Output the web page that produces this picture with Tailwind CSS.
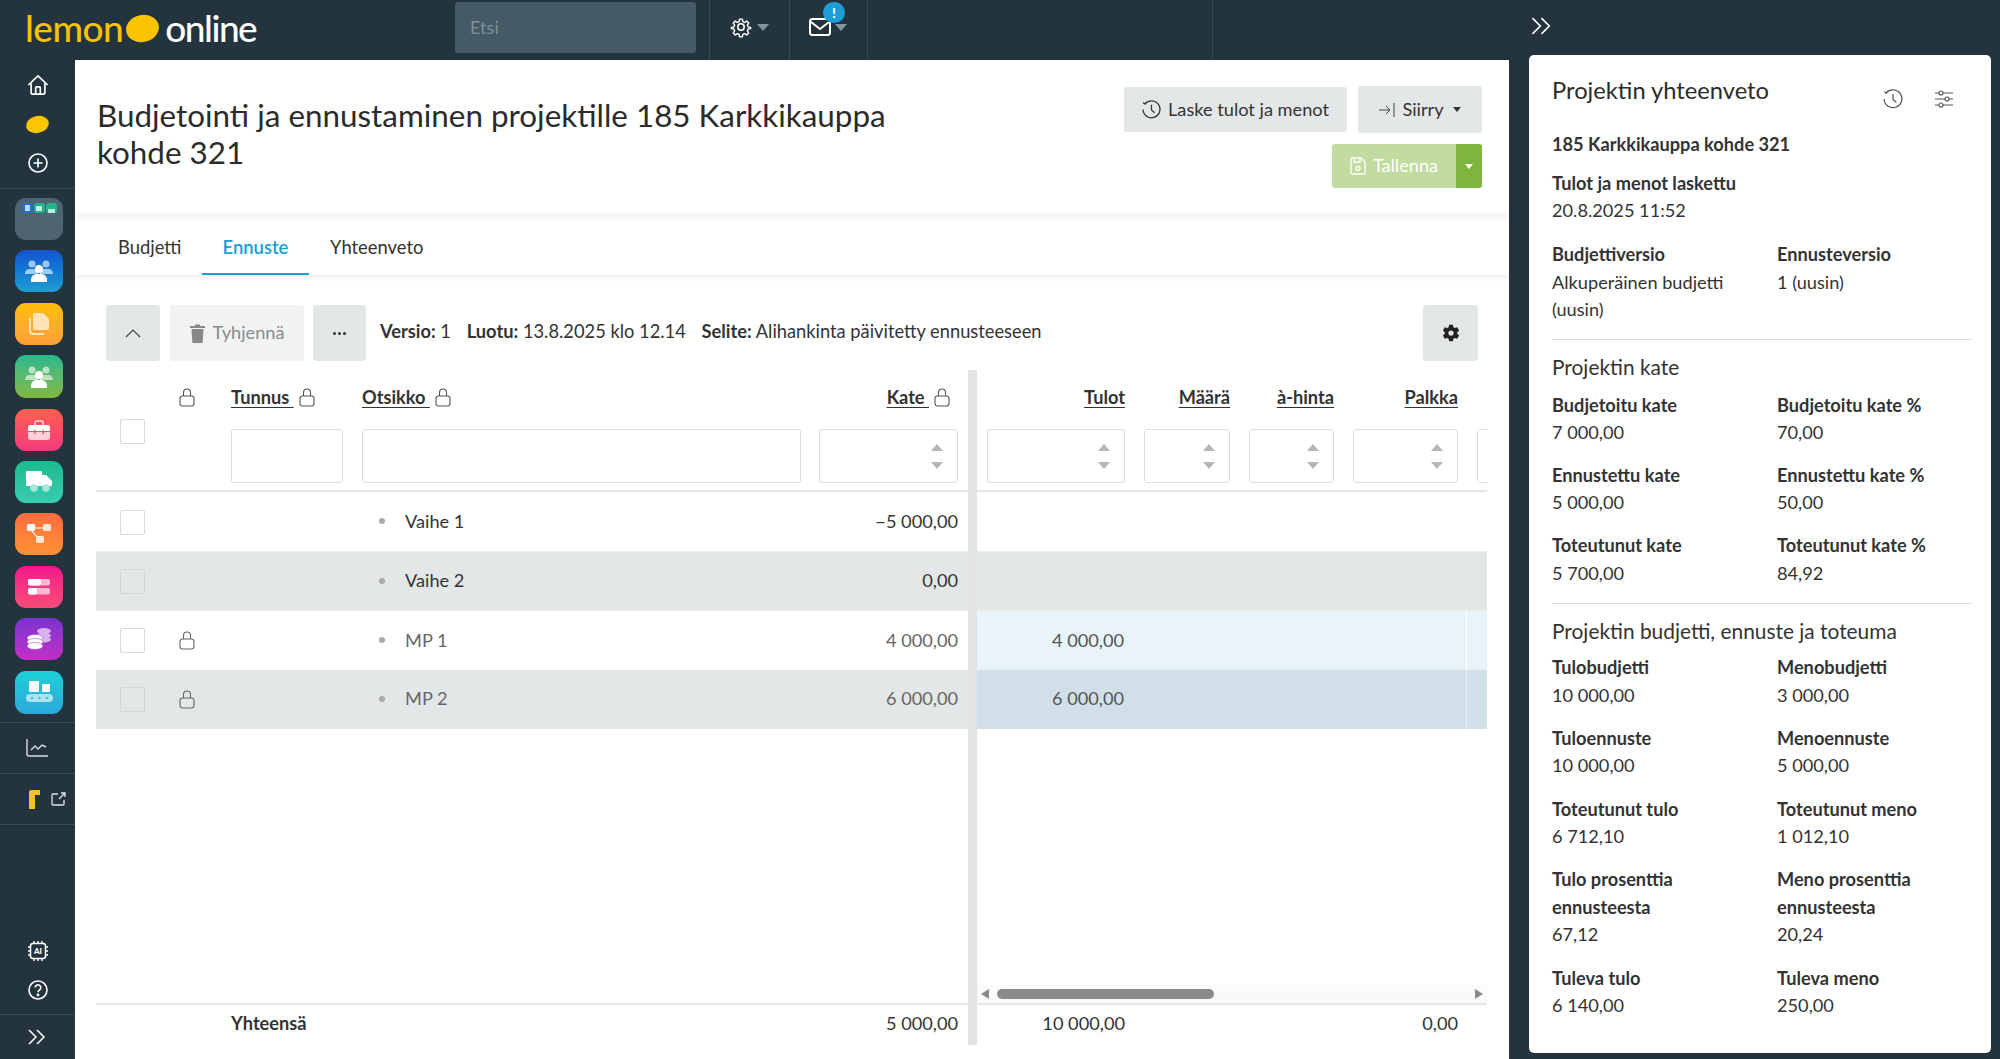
<!DOCTYPE html>
<html lang="fi">
<head>
  <meta charset="UTF-8" />
  <title>Budjetointi ja ennustaminen</title>
  <script src="https://cdn.jsdelivr.net/npm/@tailwindcss/browser@4"></script>
</head>
<body class="font-[Lato,sans-serif] bg-[#24343e] text-[#333] text-[16px] overflow-hidden">
<div class="flex w-[2000px] h-[1059px] overflow-hidden">

  <!-- Left: top bar + sidebar + main -->
  <div class="w-[1509px] flex flex-col">
    <header class="h-[60px] flex items-stretch shrink-0">
      <div class="w-[455px] pl-[25px] flex items-center text-[37px] font-medium leading-none pb-[6px]">
        <span class="text-[#f7c200] tracking-[-0.5px]">lemon</span>
        <span class="w-[33px] h-[27px] ml-[3px] mr-[6px] mt-[2px] bg-[#f9c400] rounded-[50%] -rotate-12"></span>
        <span class="text-white tracking-[-1.5px]">online</span>
      </div>
      <div class="w-[241px] h-[51px] mt-[2px] bg-[#455a67] rounded-[3px] px-[15px] flex items-center text-[#7d8e99] text-[18.2px]">Etsi</div>
      <div class="ml-[13px] w-[80px] border-l border-[#3a4a55] flex items-center justify-center gap-[5px] pb-[6px]">
        <svg class="w-[22px] h-[22px]" viewBox="0 0 24 24" fill="none" stroke="#fff" stroke-width="1.7" stroke-linejoin="round"><path d="M10.3 2.5h3.4l.5 3 2.3 1 2.5-1.700 2.400 2.400-1.700 2.500 1 2.300 3 .5v1.500l-3 .5-1 2.300 1.700 2.500-2.400 2.400-2.500-1.700-2.300 1-.5 3h-3.400l-.5-3-2.300-1-2.500 1.700-2.400-2.400 1.700-2.500-1-2.300-3-.5v-1.500l3-.5 1-2.300-1.700-2.500 2.400-2.400 2.500 1.700 2.300-1z" transform="translate(1.200 1.200) scale(.9)"/><circle cx="12" cy="12" r="3.500"/></svg>
        <span class="w-0 h-0 border-x-[6px] border-x-transparent border-t-[7px] border-t-[#8595a0]"></span>
      </div>
      <div class="w-[79px] border-x border-[#3a4a55] flex items-center justify-center gap-[4px] pb-[6px] pr-[2px] relative">
        <svg class="w-[22px] h-[20px]" viewBox="0 0 22 20" fill="none" stroke="#fff" stroke-width="2"><rect x="1" y="2" width="20" height="16" rx="2.500"/><path d="M2 5l9 7 9-7"/></svg>
        <span class="w-0 h-0 border-x-[6px] border-x-transparent border-t-[7px] border-t-[#8595a0]"></span>
        <span class="absolute left-[33px] top-[2px] w-[22px] h-[21px] rounded-full bg-[#1d9dd6] text-white text-[14px] font-bold flex items-center justify-center">!</span>
      </div>
      <div class="w-[345px] border-r border-[#3a4a55]"></div>
    </header>

    <div class="flex flex-1 min-h-0">
      <!-- Sidebar -->
      <aside class="w-[75px] shrink-0 flex flex-col items-center relative">
        <div class="w-full h-[129px] border-b border-[#3a4a55] flex flex-col items-center pt-[14px] shrink-0">
          <svg class="w-[22px] h-[22px]" viewBox="0 0 24 24" fill="none" stroke="#fff" stroke-width="1.800" stroke-linejoin="round"><path d="M1.500 12L12 2l10.500 10M4.500 10v10.500a1.500 1.500 0 0 0 1.500 1.500h12a1.500 1.500 0 0 0 1.500-1.500V10"/><path d="M9.500 22v-7a1 1 0 0 1 1-1h3a1 1 0 0 1 1 1v7"/></svg>
          <span class="mt-[20px] w-[23px] h-[17px] bg-[#fcc500] rounded-[50%] -rotate-12"></span>
          <svg class="mt-[20px] w-[20px] h-[20px]" viewBox="0 0 20 20" fill="none" stroke="#fff" stroke-width="1.600"><circle cx="10" cy="10" r="9"/><path d="M10 5.500v9M5.500 10h9"/></svg>
        </div>

        <div class="flex flex-col gap-[10.400px] pt-[9px] pl-[3px] h-[534px] shrink-0 border-b border-[#3a4a55] w-full items-center">
          <!-- first tile: three mini icons -->
          <div class="w-[48px] h-[42px] rounded-[11px] bg-[#4f6472] flex justify-center gap-[1px] pt-[5px] shrink-0">
            <span class="w-[11px] h-[10px] rounded-[3px] bg-[#2170d0] flex items-center justify-center"><span class="w-[5px] h-[6px] bg-[#bcd6f5]"></span></span>
            <span class="w-[11px] h-[10px] rounded-[3px] bg-[#1fb594] flex items-center justify-center"><span class="w-[6px] h-[5px] bg-[#c5efe3]"></span></span>
            <span class="w-[11px] h-[10px] rounded-[3px] bg-[#22b58a] flex items-end justify-center"><span class="w-[7px] h-[4px] bg-[#b7ecd8]"></span></span>
          </div>
          <!-- people blue -->
          <div class="w-[48px] h-[42px] rounded-[11px] bg-gradient-to-b from-[#1653d2] to-[#239cd2] flex items-center justify-center shrink-0">
            <svg class="w-[28px] h-[22px]" viewBox="0 0 28 22" fill="#fff"><g opacity=".6"><circle cx="7" cy="4" r="3.500"/><circle cx="21" cy="4" r="3.500"/><path d="M0 14c0-3 2-5 5-5h4c3 0 4 2 4 5zM15 14c0-3 1-5 4-5h4c3 0 5 2 5 5z"/></g><circle cx="14" cy="9" r="4"/><path d="M6 22v-2c0-4 3-6 6-6h4c3 0 6 2 6 6v2z"/></svg>
          </div>
          <!-- copy orange -->
          <div class="w-[48px] h-[42px] rounded-[11px] bg-gradient-to-b from-[#ffbe00] to-[#ff9f38] flex items-center justify-center shrink-0">
            <svg class="w-[20px] h-[22px]" viewBox="0 0 20 22"><path d="M1 5v13a3 3 0 0 0 3 3h11" fill="none" stroke="#ffe8c0" stroke-width="1.800"/><path d="M6 0h8l6 6v9a2 2 0 0 1-2 2H6a2 2 0 0 1-2-2V2a2 2 0 0 1 2-2z" fill="#ffe4b8"/></svg>
          </div>
          <!-- people green -->
          <div class="w-[48px] h-[43px] rounded-[11px] bg-gradient-to-b from-[#1fb98c] to-[#7fb83e] flex items-center justify-center shrink-0">
            <svg class="w-[28px] h-[22px]" viewBox="0 0 28 22" fill="#fff"><g opacity=".6"><circle cx="7" cy="4" r="3.500"/><circle cx="21" cy="4" r="3.500"/><path d="M0 14c0-3 2-5 5-5h4c3 0 4 2 4 5zM15 14c0-3 1-5 4-5h4c3 0 5 2 5 5z"/></g><circle cx="14" cy="9" r="4"/><path d="M6 22v-2c0-4 3-6 6-6h4c3 0 6 2 6 6v2z"/></svg>
          </div>
          <!-- toolbox red -->
          <div class="w-[48px] h-[42px] rounded-[11px] bg-gradient-to-b from-[#ff5f4c] to-[#f23a7c] flex items-center justify-center shrink-0">
            <svg class="w-[22px] h-[20px]" viewBox="0 0 22 20"><path d="M7 5V3a2 2 0 0 1 2-2h4a2 2 0 0 1 2 2v2" fill="none" stroke="#ffd8dc" stroke-width="1.500"/><path d="M3 5h16a3 3 0 0 1 3 3v3H0V8a3 3 0 0 1 3-3z" fill="#fff"/><path d="M0 12h22v5a3 3 0 0 1-3 3H3a3 3 0 0 1-3-3z" fill="#ffd0d8"/><path d="M6 10h1.500v4H6zM14.500 10H16v4h-1.500z" fill="#f8506c"/></svg>
          </div>
          <!-- truck teal -->
          <div class="w-[48px] h-[42px] rounded-[11px] bg-gradient-to-b from-[#1cb98e] to-[#37cdb2] flex items-center justify-center shrink-0">
            <svg class="w-[27px] h-[21px]" viewBox="0 0 27 21"><path d="M1 0h14a1 1 0 0 1 1 1v3h4l6 6v5H1a1 1 0 0 1-1-1V1a1 1 0 0 1 1-1z" fill="#fff"/><circle cx="8" cy="17" r="3.800" fill="#a5e8d6"/><circle cx="20" cy="17" r="3.800" fill="#a5e8d6"/></svg>
          </div>
          <!-- network orange -->
          <div class="w-[48px] h-[42px] rounded-[11px] bg-gradient-to-b from-[#ff6c40] to-[#ff9130] flex items-center justify-center shrink-0">
            <svg class="w-[24px] h-[20px]" viewBox="0 0 24 20"><path d="M7 4h10M5 7l6 7" stroke="#ffd9bd" stroke-width="1.500" fill="none"/><rect width="8" height="7" rx="1.500" fill="#fff"/><rect x="16" width="8" height="7" rx="1.500" fill="#ffe7d4"/><rect x="9" y="12" width="8" height="7" rx="1.500" fill="#ffe7d4"/></svg>
          </div>
          <!-- toggles pink -->
          <div class="w-[48px] h-[42px] rounded-[11px] bg-gradient-to-b from-[#f4128c] to-[#f64a78] flex items-center justify-center shrink-0">
            <svg class="w-[22px] h-[16px]" viewBox="0 0 22 16"><rect width="22" height="6.500" rx="2" fill="#ffb8d0"/><rect width="13" height="6.500" rx="2" fill="#fff"/><rect y="9" width="22" height="6.500" rx="2" fill="#ffb8d0"/><rect y="9" width="9" height="6.500" rx="2" fill="#fff"/></svg>
          </div>
          <!-- coins purple -->
          <div class="w-[48px] h-[42px] rounded-[11px] bg-gradient-to-b from-[#7a30d0] to-[#c22ec6] flex items-center justify-center shrink-0">
            <svg class="w-[25px] h-[22px]" viewBox="0 0 25 22" fill="#fff"><g fill="#d7b4f0"><ellipse cx="17" cy="3" rx="7" ry="3"/><ellipse cx="17" cy="7.500" rx="7" ry="3"/><ellipse cx="17" cy="11.500" rx="7" ry="3"/></g><ellipse cx="8" cy="10" rx="8" ry="3.500" stroke="#a02ccb" stroke-width=".5"/><ellipse cx="8" cy="14" rx="8" ry="3.500" stroke="#a02ccb" stroke-width=".5"/><ellipse cx="8" cy="18" rx="8" ry="3.500" stroke="#a02ccb" stroke-width=".5"/></svg>
          </div>
          <!-- conveyor cyan -->
          <div class="w-[48px] h-[43px] rounded-[11px] bg-gradient-to-b from-[#1dd0d6] to-[#2ca8d9] flex items-center justify-center shrink-0">
            <svg class="w-[27px] h-[22px]" viewBox="0 0 27 22"><rect x="3" y="0" width="10" height="11" rx="1" fill="#fff"/><rect x="16" y="3" width="8" height="8" rx="1" fill="#fff"/><rect y="13" width="27" height="8" rx="4" fill="#a8e4f0"/><circle cx="6" cy="17" r="1" fill="#2ca8d9"/><circle cx="13.500" cy="17" r="1" fill="#2ca8d9"/><circle cx="21" cy="17" r="1" fill="#2ca8d9"/></svg>
          </div>
        </div>

        <div class="w-full h-[51px] border-b border-[#3a4a55] flex items-center justify-center shrink-0">
          <svg class="w-[22px] h-[18px] mr-[1px]" viewBox="0 0 22 18" fill="none" stroke="#d8dde0" stroke-width="1.400"><path d="M1 0v15a2 2 0 0 0 2 2h19"/><path d="M5 11l4-4 3 3 4-4 4 2"/></svg>
        </div>
        <div class="w-full h-[51px] border-b border-[#3a4a55] flex items-center shrink-0 pl-[29px] gap-[11px]">
          <span class="w-[11px] h-[19px] border-l-[6px] border-t-[5px] border-[#f4c22b] rounded-tl-[3px]"></span>
          <svg class="w-[15px] h-[14px]" viewBox="0 0 15 14" fill="none" stroke="#e0e4e6" stroke-width="1.300"><path d="M7 2H2a1 1 0 0 0-1 1v9a1 1 0 0 0 1 1h10a1 1 0 0 0 1-1V8M8 7l6-6M10 1h4v4"/></svg>
        </div>

        <div class="flex-1"></div>
        <svg class="w-[22px] h-[22px] mb-[18px]" viewBox="0 0 22 22" fill="none" stroke="#fff"><rect x="3.500" y="3.500" width="15" height="15" rx="2.500" stroke-width="1.500"/><path d="M7 1v2.500M11 1v2.500M15 1v2.500M7 18.500V21M11 18.500V21M15 18.500V21M1 7h2.500M1 11h2.500M1 15h2.500M18.500 7H21M18.500 11H21M18.500 15H21" stroke-width="1.400"/><text x="11" y="14" text-anchor="middle" fill="#fff" stroke="none" font-size="8" font-weight="900" font-family="Lato">AI</text></svg>
        <svg class="w-[20px] h-[20px] mb-[14px]" viewBox="0 0 20 20" fill="none" stroke="#fff" stroke-width="1.600"><circle cx="10" cy="10" r="9"/><path d="M7.200 7.600a2.800 2.800 0 1 1 4.300 2.400c-1 .6-1.500 1.100-1.500 2.200"/><circle cx="10" cy="15" r=".6" fill="#fff"/></svg>
        <div class="w-full h-[45px] border-t border-[#3a4a55] flex items-center justify-center shrink-0">
          <svg class="w-[19px] h-[16px]" viewBox="0 0 19 16" fill="none" stroke="#fff" stroke-width="1.500"><path d="M1 1l7 7-7 7M9 1l7 7-7 7"/></svg>
        </div>
      </aside>

      <!-- Main -->
      <main class="flex-1 bg-white flex flex-col min-w-0">
        <section class="h-[154px] shrink-0 flex justify-between pl-[22px] pr-[27px] shadow-[0_2px_6px_rgba(0,0,0,0.08)] relative">
          <h1 class="w-[810px] pt-[37px] text-[31.400px] leading-[37px] text-[#2b2b2b] font-normal">Budjetointi ja ennustaminen projektille 185 Karkkikauppa kohde 321</h1>
          <div class="flex flex-col items-end pt-[26px] gap-[11px]">
            <div class="flex gap-[11px] items-center">
              <div class="w-[223px] h-[45px] rounded-[3px] bg-[#e4e7e8] flex items-center justify-center gap-[7px] text-[18.2px] text-[#333]">
                <svg class="w-[19px] h-[19px]" viewBox="0 0 18 18" fill="none" stroke="#333" stroke-width="1.200"><path d="M3 3.500A8 8 0 1 1 1 9M1 2.500l2.200 1.300L4.500 1.500M9 4.500V9.500l3 2.500"/></svg>
                Laske tulot ja menot
              </div>
              <div class="w-[124px] h-[47px] rounded-[3px] bg-[#e4e7e8] flex items-center justify-center gap-[6px] text-[18.2px] text-[#333]">
                <svg class="w-[17px] h-[14px]" viewBox="0 0 17 14" fill="none" stroke="#444" stroke-width="1"><path d="M0 7h10M7 3l4 4-4 4M15 0v14"/></svg>
                Siirry
                <span class="ml-[3px] w-0 h-0 border-x-[4px] border-x-transparent border-t-[5px] border-t-[#333]"></span>
              </div>
            </div>
            <div class="flex h-[44px] rounded-[3px] overflow-hidden text-white text-[18.2px]">
              <div class="w-[124px] bg-[#c1dba1] flex items-center justify-center gap-[7px]">
                <svg class="w-[16px] h-[18px]" viewBox="0 0 16 18" fill="none" stroke="#fff" stroke-width="1.300"><path d="M2 1h9l4 4v10.500a1.500 1.500 0 0 1-1.500 1.500h-11A1.500 1.500 0 0 1 1 15.500V2a1 1 0 0 1 1-1z"/><circle cx="8" cy="11.500" r="2"/><path d="M4 1v4h6V1"/></svg>
                Tallenna
              </div>
              <div class="w-[26px] bg-[#7eb53c] flex items-center justify-center">
                <span class="w-0 h-0 border-x-[4px] border-x-transparent border-t-[5px] border-t-white"></span>
              </div>
            </div>
          </div>
        </section>

        <nav class="h-[61px] shrink-0 flex pl-[22px] text-[18.4px] shadow-[0_2px_6px_rgba(0,0,0,0.08)] relative">
          <a class="w-[105px] pl-[21px] pt-[20px]">Budjetti</a>
          <a class="w-[107px] text-center pt-[20px] h-[61px] border-b-2 border-[#1a9ed4] text-[#1a9ed4] font-semibold">Ennuste</a>
          <a class="pl-[21px] pt-[20px]">Yhteenveto</a>
        </nav>

        <!-- Toolbar -->
        <div class="mt-[30px] h-[56px] shrink-0 ml-[31px] mr-[31px] flex items-center">
          <div class="w-[54px] h-[56px] bg-[#e4e7e8] rounded-[3px] flex items-center justify-center">
            <svg class="w-[16px] h-[10px]" viewBox="0 0 16 10" fill="none" stroke="#444" stroke-width="1.200"><path d="M1 9l7-7 7 7"/></svg>
          </div>
          <div class="ml-[10px] w-[134px] h-[56px] bg-[#f1f3f3] rounded-[3px] flex items-center justify-center gap-[8px] text-[#8a8a8a] text-[18.2px]">
            <svg class="w-[15px] h-[19px]" viewBox="0 0 15 19" fill="#888"><path d="M0 2h5V0.500h5V2h5v2H0zM1.500 5h12l-.8 13a1 1 0 0 1-1 1H3.300a1 1 0 0 1-1-1z"/></svg>
            Tyhjennä
          </div>
          <div class="ml-[9px] w-[53px] h-[56px] bg-[#e4e7e8] rounded-[3px] flex items-center justify-center gap-[2px]">
            <span class="w-[3px] h-[3px] rounded-full bg-[#333]"></span><span class="w-[3px] h-[3px] rounded-full bg-[#333]"></span><span class="w-[3px] h-[3px] rounded-full bg-[#333]"></span>
          </div>
          <p class="ml-[14px] pb-[2px] text-[18.3px] text-[#333]"><b>Versio:</b> 1 <b class="ml-[11px]">Luotu:</b> 13.8.2025 klo 12.14 <b class="ml-[11px]">Selite:</b> Alihankinta päivitetty ennusteeseen</p>
          <div class="ml-auto w-[55px] h-[56px] bg-[#e4e7e8] rounded-[3px] flex items-center justify-center">
            <svg class="w-[18px] h-[18px]" viewBox="0 0 24 24" fill="#222"><path fill-rule="evenodd" d="M9.500 1h5l.7 3.300 1.900 1.100 3.200-1 2.500 4.300-2.500 2.200v2.200l2.500 2.200-2.500 4.300-3.200-1-1.900 1.100-.7 3.300h-5l-.7-3.300-1.900-1.100-3.200 1-2.500-4.300 2.500-2.200v-2.200L1.200 8.700l2.500-4.300 3.200 1 1.900-1.100zM12 8.500a3.500 3.500 0 1 0 0 7 3.500 3.500 0 0 0 0-7z"/></svg>
          </div>
        </div>

        <!-- Table -->
        <div class="mt-[9px] ml-[21px] w-[1391px] h-[675px] flex shrink-0">
          <!-- Frozen columns -->
          <div class="w-[872px] flex flex-col shrink-0">
            <div class="h-[122px] flex border-b-2 border-[#e4e5e6] shrink-0">
              <div class="w-[76px] pl-[24px] pt-[49px]"><span class="block w-[25px] h-[25px] bg-white border border-[#d9d9d9] rounded-[2px]"></span></div>
              <div class="w-[59px] pt-[18px] pl-[7px]">
                <svg class="w-[16px] h-[19px]" viewBox="0 0 16 19" fill="none" stroke="#555" stroke-width="1.100"><path d="M4.500 8V4.500a3.500 3.500 0 0 1 7 0V8"/><rect x="1" y="8" width="14" height="10" rx="2.500"/></svg>
              </div>
              <div class="w-[131px]">
                <div class="h-[59px] pt-[14px] flex items-start gap-[5px]"><span class="font-bold underline underline-offset-[3px] text-[18.2px]">Tunnus&nbsp;</span><svg class="w-[16px] h-[19px] mt-[4px]" viewBox="0 0 16 19" fill="none" stroke="#555" stroke-width="1.100"><path d="M4.500 8V4.500a3.500 3.500 0 0 1 7 0V8"/><rect x="1" y="8" width="14" height="10" rx="2.500"/></svg></div>
                <div class="w-[112px] h-[54px] border border-[#dcdcdc] rounded-[3px]"></div>
              </div>
              <div class="w-[457px]">
                <div class="h-[59px] pt-[14px] flex items-start gap-[5px]"><span class="font-bold underline underline-offset-[3px] text-[18.2px]">Otsikko&nbsp;</span><svg class="w-[16px] h-[19px] mt-[4px]" viewBox="0 0 16 19" fill="none" stroke="#555" stroke-width="1.100"><path d="M4.500 8V4.500a3.500 3.500 0 0 1 7 0V8"/><rect x="1" y="8" width="14" height="10" rx="2.500"/></svg></div>
                <div class="w-[439px] h-[54px] border border-[#dcdcdc] rounded-[3px]"></div>
              </div>
              <div class="w-[139px]">
                <div class="h-[59px] pt-[14px] flex items-start justify-end gap-[5px]"><span class="font-bold underline underline-offset-[3px] text-[18.2px]">Kate&nbsp;</span><svg class="w-[16px] h-[19px] mt-[4px] mr-[8px]" viewBox="0 0 16 19" fill="none" stroke="#555" stroke-width="1.100"><path d="M4.500 8V4.500a3.500 3.500 0 0 1 7 0V8"/><rect x="1" y="8" width="14" height="10" rx="2.500"/></svg></div>
                <div class="h-[54px] border border-[#dcdcdc] rounded-[3px] flex flex-col items-end justify-center gap-[11px] pr-[14px]">
                  <span class="w-0 h-0 border-x-[6px] border-x-transparent border-b-[7px] border-b-[#b5b5b5]"></span>
                  <span class="w-0 h-0 border-x-[6px] border-x-transparent border-t-[7px] border-t-[#b5b5b5]"></span>
                </div>
              </div>
            </div>

            <div class="h-[60px] flex items-center shrink-0 text-[18.2px] text-[#333] border-b border-[#eceeee]">
              <div class="w-[135px] pl-[24px] pt-[1px]"><span class="block w-[25px] h-[25px] bg-white border border-[#d9d9d9] rounded-[2px]"></span></div>
              <div class="w-[131px]"></div>
              <div class="w-[457px] flex items-center"><span class="w-[6px] h-[6px] rounded-full bg-[#aaa] ml-[17px] mr-[20px]"></span>Vaihe 1</div>
              <div class="w-[139px] text-right">−5 000,00</div>
            </div>
            <div class="h-[59px] flex items-center shrink-0 text-[18.2px] text-[#333] bg-[#e4e7e8] border-b border-[#eceeee]">
              <div class="w-[135px] pl-[24px]"><span class="block w-[25px] h-[25px] border border-[#d3d6d7] rounded-[2px]"></span></div>
              <div class="w-[131px]"></div>
              <div class="w-[457px] flex items-center"><span class="w-[6px] h-[6px] rounded-full bg-[#aaa] ml-[17px] mr-[20px]"></span>Vaihe 2</div>
              <div class="w-[139px] text-right">0,00</div>
            </div>
            <div class="h-[59px] flex items-center shrink-0 text-[18.2px] text-[#666]">
              <div class="w-[76px] pl-[24px]"><span class="block w-[25px] h-[25px] bg-white border border-[#d9d9d9] rounded-[2px]"></span></div>
              <div class="w-[59px] pl-[7px]"><svg class="block w-[16px] h-[19px]" viewBox="0 0 16 19" fill="none" stroke="#666" stroke-width="1.100"><path d="M4.500 8V4.500a3.500 3.500 0 0 1 7 0V8"/><rect x="1" y="8" width="14" height="10" rx="2.500"/></svg></div>
              <div class="w-[131px]"></div>
              <div class="w-[457px] flex items-center"><span class="w-[6px] h-[6px] rounded-full bg-[#aaa] ml-[17px] mr-[20px]"></span>MP 1</div>
              <div class="w-[139px] text-right">4 000,00</div>
            </div>
            <div class="h-[59px] flex items-center shrink-0 text-[18.2px] text-[#666] bg-[#e4e7e8]">
              <div class="w-[76px] pl-[24px]"><span class="block w-[25px] h-[25px] border border-[#d3d6d7] rounded-[2px]"></span></div>
              <div class="w-[59px] pl-[7px]"><svg class="block w-[16px] h-[19px]" viewBox="0 0 16 19" fill="none" stroke="#666" stroke-width="1.100"><path d="M4.500 8V4.500a3.500 3.500 0 0 1 7 0V8"/><rect x="1" y="8" width="14" height="10" rx="2.500"/></svg></div>
              <div class="w-[131px]"></div>
              <div class="w-[457px] flex items-center pb-[1px]"><span class="w-[6px] h-[6px] rounded-full bg-[#aaa] ml-[17px] mr-[20px]"></span>MP 2</div>
              <div class="w-[139px] text-right pb-[1px]">6 000,00</div>
            </div>

            <div class="flex-1"></div>
            <div class="h-[42px] border-t-2 border-[#e4e5e6] flex items-center text-[18.2px] shrink-0 pb-[2px]">
              <div class="w-[135px]"></div>
              <div class="w-[588px] font-bold">Yhteensä</div>
              <div class="w-[139px] text-right">5 000,00</div>
            </div>
          </div>

          <div class="w-[9px] bg-[#e2e3e5] shrink-0"></div>

          <!-- Scrolling columns -->
          <div class="w-[510px] flex flex-col overflow-hidden shrink-0">
            <div class="h-[122px] flex gap-[19px] pl-[10px] border-b-2 border-[#e4e5e6] shrink-0 overflow-hidden">
              <div class="w-[138px] shrink-0">
                <div class="h-[59px] pt-[14px] text-right"><span class="font-bold underline underline-offset-[3px] text-[18.2px]">Tulot</span></div>
                <div class="h-[54px] border border-[#dcdcdc] rounded-[3px] flex flex-col items-end justify-center gap-[11px] pr-[14px]">
                  <span class="w-0 h-0 border-x-[6px] border-x-transparent border-b-[7px] border-b-[#b5b5b5]"></span>
                  <span class="w-0 h-0 border-x-[6px] border-x-transparent border-t-[7px] border-t-[#b5b5b5]"></span>
                </div>
              </div>
              <div class="w-[86px] shrink-0">
                <div class="h-[59px] pt-[14px] text-right"><span class="font-bold underline underline-offset-[3px] text-[18.2px]">Määrä</span></div>
                <div class="h-[54px] border border-[#dcdcdc] rounded-[3px] flex flex-col items-end justify-center gap-[11px] pr-[14px]">
                  <span class="w-0 h-0 border-x-[6px] border-x-transparent border-b-[7px] border-b-[#b5b5b5]"></span>
                  <span class="w-0 h-0 border-x-[6px] border-x-transparent border-t-[7px] border-t-[#b5b5b5]"></span>
                </div>
              </div>
              <div class="w-[85px] shrink-0">
                <div class="h-[59px] pt-[14px] text-right"><span class="font-bold underline underline-offset-[3px] text-[18.2px]">à-hinta</span></div>
                <div class="h-[54px] border border-[#dcdcdc] rounded-[3px] flex flex-col items-end justify-center gap-[11px] pr-[14px]">
                  <span class="w-0 h-0 border-x-[6px] border-x-transparent border-b-[7px] border-b-[#b5b5b5]"></span>
                  <span class="w-0 h-0 border-x-[6px] border-x-transparent border-t-[7px] border-t-[#b5b5b5]"></span>
                </div>
              </div>
              <div class="w-[105px] shrink-0">
                <div class="h-[59px] pt-[14px] text-right"><span class="font-bold underline underline-offset-[3px] text-[18.2px]">Palkka</span></div>
                <div class="h-[54px] border border-[#dcdcdc] rounded-[3px] flex flex-col items-end justify-center gap-[11px] pr-[14px]">
                  <span class="w-0 h-0 border-x-[6px] border-x-transparent border-b-[7px] border-b-[#b5b5b5]"></span>
                  <span class="w-0 h-0 border-x-[6px] border-x-transparent border-t-[7px] border-t-[#b5b5b5]"></span>
                </div>
              </div>
              <div class="w-[60px] shrink-0 pt-[59px]"><div class="h-[54px] border border-[#dcdcdc] rounded-[3px]"></div></div>
            </div>

            <div class="h-[60px] shrink-0 border-b border-[#eceeee]"></div>
            <div class="h-[59px] shrink-0 bg-[#e4e7e8] border-b border-[#eceeee]"></div>
            <div class="h-[59px] shrink-0 bg-[#e8f3fa] flex items-center text-[18.2px] text-[#555] relative">
              <div class="w-[147px] text-right">4 000,00</div>
              <span class="absolute left-[489px] top-0 bottom-0 w-px bg-white"></span>
            </div>
            <div class="h-[59px] shrink-0 bg-[#d1e0e8] flex items-center text-[18.2px] text-[#555] relative">
              <div class="w-[147px] text-right pb-[1px]">6 000,00</div>
              <span class="absolute left-[489px] top-0 bottom-0 w-px bg-[#e4ecf0]"></span>
            </div>

            <div class="flex-1"></div>
            <!-- Scrollbar -->
            <div class="h-[18px] bg-[#fafafa] flex items-center shrink-0 pl-[4px] pr-[4px]">
              <span class="w-0 h-0 border-y-[5px] border-y-transparent border-r-[8px] border-r-[#8a8a8a]"></span>
              <span class="ml-[8px] w-[217px] h-[10px] rounded-[5px] bg-[#8a8a8a]"></span>
              <span class="ml-auto w-0 h-0 border-y-[5px] border-y-transparent border-l-[8px] border-l-[#8a8a8a]"></span>
            </div>
            <div class="h-[42px] border-t-2 border-[#e4e5e6] flex items-center text-[18.2px] shrink-0 pb-[2px]">
              <div class="w-[148px] text-right">10 000,00</div>
              <div class="w-[333px] text-right">0,00</div>
            </div>
          </div>
        </div>
      </main>
    </div>
  </div>

  <!-- Right panel -->
  <div class="w-[491px] flex flex-col pl-[20px] pr-[9px] shrink-0">
    <div class="h-[55px] shrink-0 flex items-center">
      <svg class="ml-[2px] mb-[3px] w-[22px] h-[18px]" viewBox="0 0 19 16" fill="none" stroke="#fff" stroke-width="1.400"><path d="M1 1l7 7-7 7M9 1l7 7-7 7"/></svg>
    </div>
    <aside class="h-[998px] bg-white rounded-[5px] pl-[23px] pr-[20px] pt-[21px] text-[18.2px] leading-[27.500px] text-[#333]">
      <div class="h-[29px] flex justify-between text-[23.700px] leading-[29px] text-[#2b2b2b] mb-[25.500px]">
        <span>Projektin yhteenveto</span>
        <span class="flex gap-[31px] pr-[17px] pt-[13px]">
          <svg class="w-[20px] h-[20px]" viewBox="0 0 18 18" fill="none" stroke="#555" stroke-width="1.100"><path d="M3 3.500A8 8 0 1 1 1 9M1 2.500l2.200 1.300L4.500 1.500M9 4.500V9.500l3 2.500"/></svg>
          <svg class="w-[20px] h-[20px]" viewBox="0 0 20 20" fill="none" stroke="#555" stroke-width="1.100"><path d="M1 4h18M1 10h18M1 16h18"/><circle cx="7" cy="4" r="2" fill="#fff"/><circle cx="13" cy="10" r="2" fill="#fff"/><circle cx="7" cy="16" r="2" fill="#fff"/></svg>
        </span>
      </div>
      <div class="font-bold mb-[11.500px]">185 Karkkikauppa kohde 321</div>
      <div class="mb-[16.500px]"><div class="font-bold">Tulot ja menot laskettu</div>20.8.2025 11:52</div>
      <div class="grid grid-cols-[225px_1fr] pb-[15px] border-b border-[#ddd]">
        <div><div class="font-bold">Budjettiversio</div>Alkuperäinen budjetti<br />(uusin)</div>
        <div><div class="font-bold">Ennusteversio</div>1 (uusin)</div>
      </div>
      <div class="text-[20.900px] mt-[13px] mb-[11.500px]">Projektin kate</div>
      <div class="grid grid-cols-[225px_1fr] gap-y-[15.300px] pb-[16px] border-b border-[#ddd]">
        <div><div class="font-bold">Budjetoitu kate</div>7 000,00</div>
        <div><div class="font-bold">Budjetoitu kate %</div>70,00</div>
        <div><div class="font-bold">Ennustettu kate</div>5 000,00</div>
        <div><div class="font-bold">Ennustettu kate %</div>50,00</div>
        <div><div class="font-bold">Toteutunut kate</div>5 700,00</div>
        <div><div class="font-bold">Toteutunut kate %</div>84,92</div>
      </div>
      <div class="text-[20.900px] mt-[13px] mb-[9.500px]">Projektin budjetti, ennuste ja toteuma</div>
      <div class="grid grid-cols-[225px_1fr] gap-y-[15.800px]">
        <div><div class="font-bold">Tulobudjetti</div>10 000,00</div>
        <div><div class="font-bold">Menobudjetti</div>3 000,00</div>
        <div><div class="font-bold">Tuloennuste</div>10 000,00</div>
        <div><div class="font-bold">Menoennuste</div>5 000,00</div>
        <div><div class="font-bold">Toteutunut tulo</div>6 712,10</div>
        <div><div class="font-bold">Toteutunut meno</div>1 012,10</div>
        <div><div class="font-bold">Tulo prosenttia<br />ennusteesta</div>67,12</div>
        <div><div class="font-bold">Meno prosenttia<br />ennusteesta</div>20,24</div>
        <div><div class="font-bold">Tuleva tulo</div>6 140,00</div>
        <div><div class="font-bold">Tuleva meno</div>250,00</div>
      </div>
    </aside>
  </div>
</div>
</body>
</html>
